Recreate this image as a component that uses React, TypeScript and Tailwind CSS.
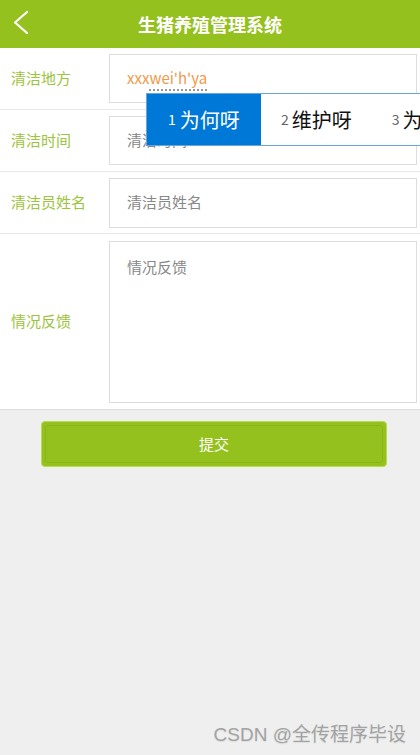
const font = { fontFamily: '"Noto Sans CJK SC", "Noto Sans", sans-serif' };

export default function App() {
  return (
    <main
      className="relative flex min-h-[755px] flex-col overflow-hidden bg-[#efefef]"
      style={font}
    >
      <header className="relative flex h-[48px] items-center justify-center bg-[#95c11f]">
        <svg
          className="absolute left-0 top-0"
          width="40"
          height="48"
          viewBox="0 0 40 48"
          fill="none"
        >
          <polyline
            points="27,12 15,22.5 27,33"
            stroke="white"
            strokeWidth="2.2"
            strokeLinecap="round"
            strokeLinejoin="round"
          />
        </svg>
        <h1 className="text-[18px] font-bold text-white">生猪养殖管理系统</h1>
      </header>

      <section className="bg-white">
        <div className="flex h-[62px] items-center border-b border-[#e8e8e8]">
          <div className="w-[109px] pl-[11px] text-[15px] text-[#9cc43c]">清洁地方</div>
          <div className="mr-[3px] flex h-[49px] flex-1 items-center border border-[#dddddd] pl-[17px] text-[15px] text-[#ef9a4a]">
            <span>xxx</span>
            <span className="underline decoration-dotted decoration-[#777] underline-offset-[5px]">
              wei'h'ya
            </span>
          </div>
        </div>

        <div className="flex h-[62px] items-center border-b border-[#e8e8e8]">
          <div className="w-[109px] pl-[11px] text-[15px] text-[#9cc43c]">清洁时间</div>
          <div className="mr-[3px] flex h-[49px] flex-1 items-center border border-[#dddddd] pl-[17px] text-[15px] text-[#888888]">
            清洁时间
          </div>
        </div>

        <div className="flex h-[62px] items-center border-b border-[#e8e8e8]">
          <div className="w-[109px] pl-[11px] text-[15px] text-[#9cc43c]">清洁员姓名</div>
          <div className="mr-[3px] flex h-[50px] flex-1 items-center border border-[#dddddd] pl-[17px] text-[15px] text-[#888888]">
            清洁员姓名
          </div>
        </div>

        <div className="flex h-[176px] items-center border-b border-[#dcdcdc]">
          <div className="w-[109px] pl-[11px] text-[15px] text-[#9cc43c]">情况反馈</div>
          <div className="mr-[3px] h-[162px] flex-1 border border-[#dddddd] pl-[17px] pt-[14px] text-[15px] text-[#888888]">
            情况反馈
          </div>
        </div>
      </section>

      <div className="flex justify-start pl-[41px] pt-[11px]">
        <button className="flex h-[46px] w-[346px] items-center justify-center rounded-[4px] border border-[#b9dc4a] bg-[#95c11f] p-[3px]">
          <span className="flex h-full w-full items-center justify-center rounded-[3px] border border-[#8ab516] text-[15px] text-white">
            提交
          </span>
        </button>
      </div>

      <div
        className="mt-auto flex justify-end pb-[6px] pr-[14px] text-[19px] text-[#a3a3a3] [text-shadow:0_1px_1px_rgba(0,0,0,0.08)]"
        style={{ fontFamily: '"Liberation Sans", "Noto Sans CJK SC", sans-serif' }}
      >
        CSDN @全传程序毕设
      </div>

      <div className="absolute left-[146px] top-[93px] flex h-[53px] w-[300px] items-center border border-[#6aa5d8] bg-white">
        <div className="flex h-full w-[114px] items-center bg-[#0078d7] pl-[21px] text-white">
          <span className="mr-[4px] text-[14px]">1</span>
          <span className="text-[20px]">为何呀</span>
        </div>
        <div className="flex items-center pl-[20px] text-[#111]">
          <span className="mr-[3px] text-[14px] text-[#666]">2</span>
          <span className="text-[20px]">维护呀</span>
        </div>
        <div className="flex items-center pl-[40px] text-[#111]">
          <span className="mr-[3px] text-[14px] text-[#666]">3</span>
          <span className="text-[20px]">为何</span>
        </div>
      </div>
    </main>
  );
}
